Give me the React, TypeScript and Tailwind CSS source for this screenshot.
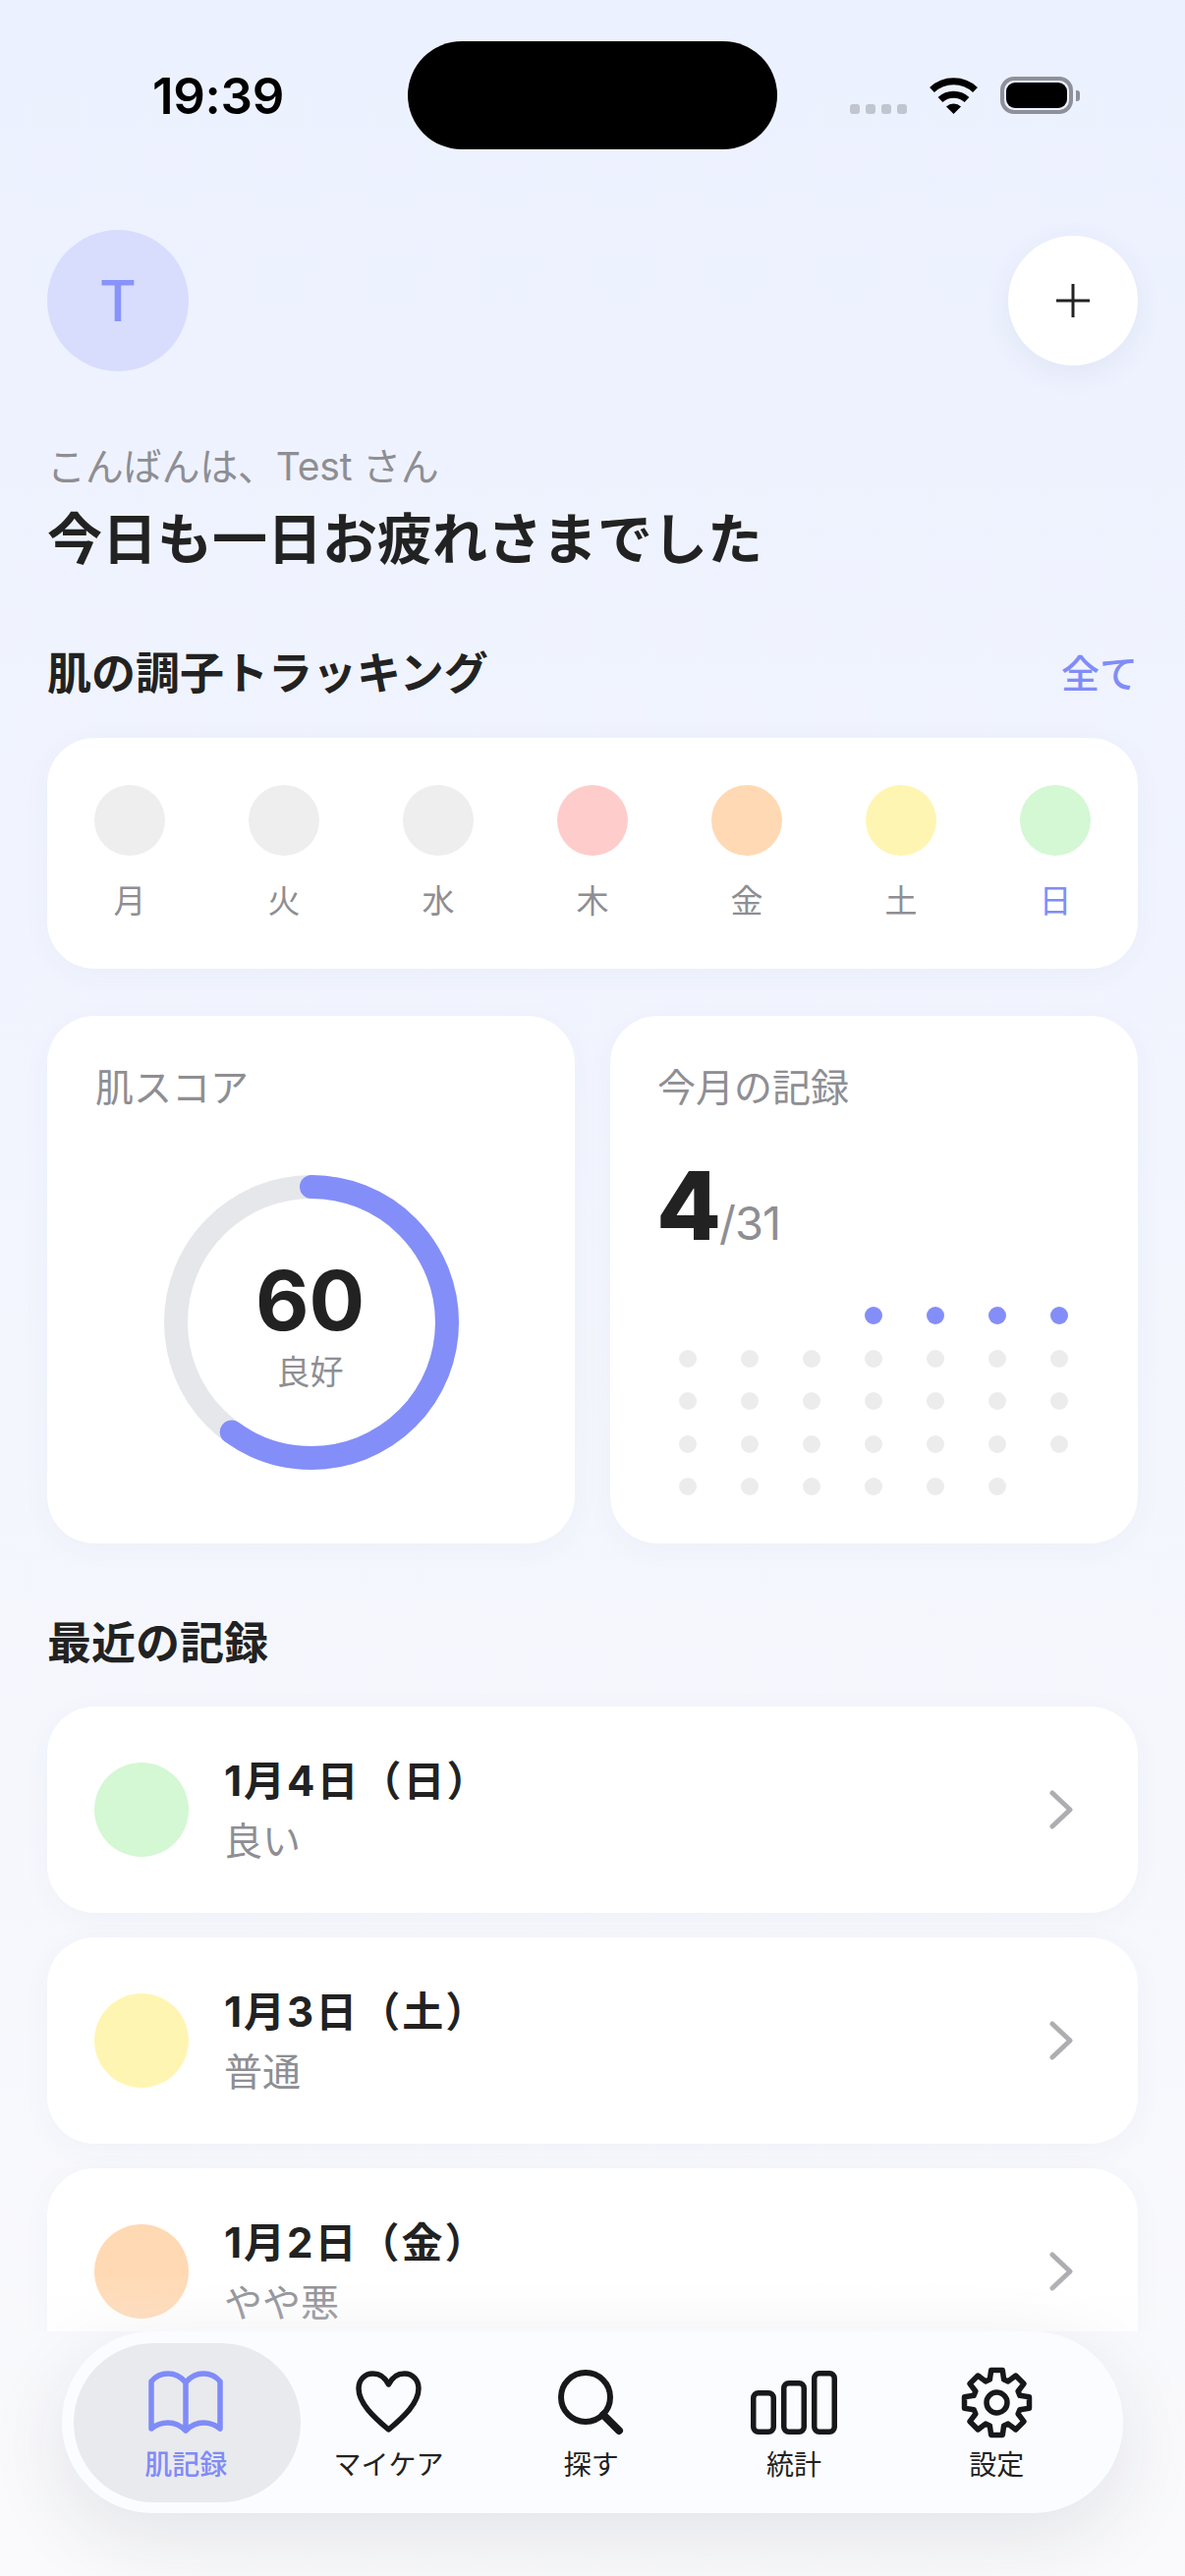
import React from 'react';

const week = [
  { label: '月', color: 'bg-[#eeeeee]', text: 'text-[#8e8e93]' },
  { label: '火', color: 'bg-[#eeeeee]', text: 'text-[#8e8e93]' },
  { label: '水', color: 'bg-[#eeeeee]', text: 'text-[#8e8e93]' },
  { label: '木', color: 'bg-[#ffcccc]', text: 'text-[#8e8e93]' },
  { label: '金', color: 'bg-[#ffd9b3]', text: 'text-[#8e8e93]' },
  { label: '土', color: 'bg-[#fff5b3]', text: 'text-[#8e8e93]' },
  { label: '日', color: 'bg-[#d4f7d4]', text: 'text-[#818cf8]' },
];

const records = [
  { date: '1月4日（日）', note: '良い', color: 'bg-[#d4f7d4]' },
  { date: '1月3日（土）', note: '普通', color: 'bg-[#fff5b3]' },
  { date: '1月2日（金）', note: 'やや悪', color: 'bg-[#ffd9b3]' },
];

// 8 tooth cog outline, 73x73 box
const gearPath = () => {
  const pts: string[] = [];
  const at = (r: number, deg: number) => {
    const a = ((deg - 90) * Math.PI) / 180;
    return `${(36.5 + r * Math.cos(a)).toFixed(2)} ${(36.5 + r * Math.sin(a)).toFixed(2)}`;
  };
  for (let i = 0; i < 8; i++) {
    const c = i * 45;
    pts.push(at(24.5, c - 17), at(33.5, c - 10), at(33.5, c + 10), at(24.5, c + 17));
  }
  return `M${pts.join('L')}Z`;
};

const BookIcon = () => (
  <svg width="76" height="64" viewBox="0 0 76 64" fill="none" stroke="#7f8bf8" strokeWidth="5.5" strokeLinejoin="round" strokeLinecap="round">
    <path d="M38 12C33 6 26 3 20 3C13 3 7 6 3 11V59C8 55 14 53 20 53C27 53 33 56 38 61C43 56 49 53 56 53C62 53 68 55 73 59V11C69 6 63 3 56 3C50 3 43 6 38 12ZM38 12V61" />
  </svg>
);

const HeartIcon = () => (
  <svg width="67" height="64" viewBox="0 0 67 64" fill="none" stroke="#18181b" strokeWidth="5.5" strokeLinejoin="round">
    <path d="M33.5 14C30 7 24 3 17.5 3C9 3 3 9.5 3 18C3 33 18 47 33.5 60C49 47 64 33 64 18C64 9.5 58 3 49.5 3C43 3 37 7 33.5 14Z" />
  </svg>
);

const SearchIcon = () => (
  <svg width="67" height="67" viewBox="0 0 67 67" fill="none" stroke="#18181b" strokeLinecap="round">
    <circle cx="28" cy="28" r="25" strokeWidth="6" />
    <path d="M46 46L62 62" strokeWidth="8" />
  </svg>
);

const BarsIcon = () => (
  <svg width="88" height="65" viewBox="0 0 88 65" fill="none" stroke="#18181b" strokeWidth="5.5">
    <rect x="2.75" y="22.75" width="20.5" height="39.5" rx="5" />
    <rect x="33.75" y="12.75" width="20.5" height="49.5" rx="5" />
    <rect x="64.75" y="2.75" width="20.5" height="59.5" rx="5" />
  </svg>
);

const GearIcon = () => (
  <svg width="73" height="73" viewBox="0 0 73 73" fill="none" stroke="#18181b" strokeWidth="5.5" strokeLinejoin="round">
    <path d={gearPath()} />
    <circle cx="36.5" cy="36.5" r="10.5" />
  </svg>
);

const navItems = [
  { label: '肌記録', icon: <BookIcon />, active: true },
  { label: 'マイケア', icon: <HeartIcon />, active: false },
  { label: '探す', icon: <SearchIcon />, active: false },
  { label: '統計', icon: <BarsIcon />, active: false },
  { label: '設定', icon: <GearIcon />, active: false },
];

const StatusBar = () => (
  <div className="flex items-center h-[110px] mt-[42px] shrink-0">
    <span className="ml-[155px] w-[260px] text-[51px] font-semibold leading-none text-black tracking-[-0.3px]">19:39</span>
    <div className="w-[376px] h-[110px] rounded-[55px] bg-black" />
    <div className="flex items-center ml-[74px]">
      <div className="flex gap-[6px] mt-[28px]">
        <span className="w-[10px] h-[10px] rounded-[3px] bg-[#c1c5d0]" />
        <span className="w-[10px] h-[10px] rounded-[3px] bg-[#c1c5d0]" />
        <span className="w-[10px] h-[10px] rounded-[3px] bg-[#c1c5d0]" />
        <span className="w-[10px] h-[10px] rounded-[3px] bg-[#c1c5d0]" />
      </div>
      <svg className="ml-[22px]" width="51" height="37" viewBox="0 0 51 37" fill="none" stroke="#000" strokeWidth="7">
        <path d="M3.5 12.5A32 32 0 0 1 47.5 12.5" />
        <path d="M12 22.5A20 20 0 0 1 39 22.5" />
        <path d="M18 29.5A11 11 0 0 1 33 29.5L25.5 37Z" fill="#000" stroke="none" />
      </svg>
      <div className="ml-[22px] flex items-center">
        <div className="w-[74px] h-[38px] rounded-[14px] border-[4px] border-[#8e909a] p-[2px]">
          <div className="w-full h-full rounded-[9px] bg-black" />
        </div>
        <span className="ml-[3px] w-[4px] h-[11px] rounded-r-[3px] bg-[#8e909a]" />
      </div>
    </div>
  </div>
);

const ScoreCard = () => {
  const r = 138;
  const circumference = 2 * Math.PI * r;
  return (
    <div className="flex-1 h-[537px] rounded-[48px] bg-white pt-[26px] shadow-[0_6px_30px_rgba(60,70,120,0.04)]">
      <p className="pl-[49px] pt-[20px] text-[39px] leading-[54px] text-[#8e8e93]">肌スコア</p>
      <div className="relative w-[300px] h-[300px] mx-auto mt-[62px]">
        <svg width="300" height="300" viewBox="0 0 300 300" fill="none" strokeWidth="24">
          <circle cx="150" cy="150" r={r} stroke="#e5e7eb" />
          <circle
            cx="150"
            cy="150"
            r={r}
            stroke="#838ef8"
            strokeLinecap="round"
            strokeDasharray={`${circumference * 0.6} ${circumference}`}
            transform="rotate(-90 150 150)"
          />
        </svg>
        <div className="absolute inset-0 flex flex-col items-center justify-center pt-[10px] pr-[2px]">
          <span className="text-[84px] leading-[84px] font-bold text-[#222222]">60</span>
          <span className="mt-[8px] text-[34px] leading-[46px] text-[#8e8e93]">良好</span>
        </div>
      </div>
    </div>
  );
};

const MonthCard = () => (
  <div className="flex-1 h-[537px] rounded-[48px] bg-white shadow-[0_6px_30px_rgba(60,70,120,0.04)]">
    <p className="pl-[48px] pt-[46px] text-[39px] leading-[54px] text-[#8e8e93]">今月の記録</p>
    <div className="flex items-baseline pl-[47px] mt-[45px]">
      <span className="text-[96px] leading-[96px] font-extrabold text-[#222222]">4</span>
      <span className="-ml-[2px] text-[47px] leading-[48px] text-[#8e8e93] tracking-[-1px]">/31</span>
    </div>
    <div className="grid grid-cols-[repeat(7,18px)] gap-x-[45px] gap-y-[25.5px] pl-[70px] mt-[55px]">
      {Array.from({ length: 34 }).map((_, i) => (
        <span
          key={i}
          className={`w-[18px] h-[18px] rounded-full ${i < 3 ? 'bg-transparent' : i < 7 ? 'bg-[#838ef8]' : 'bg-[#ececec]'}`}
        />
      ))}
    </div>
  </div>
);

const App: React.FC = () => {
  return (
    <div className="w-[1206px] h-[2622px] flex flex-col overflow-hidden bg-gradient-to-b from-[#ecf1ff] to-[#fafafc] font-[Inter,'Noto_Sans_CJK_JP',sans-serif]">
      <StatusBar />

      <main className="relative flex-1 min-h-0 overflow-hidden px-[48px]">
        {/* Header */}
        <div className="flex items-center justify-between h-[144px] mt-[82px]">
          <div className="w-[144px] h-[144px] rounded-full bg-[#d8ddfd] flex items-center justify-center text-[58px] font-medium text-[#8894fa]">T</div>
          <div className="w-[132px] h-[132px] rounded-full bg-white flex items-center justify-center shadow-[0_8px_30px_rgba(60,70,120,0.07)]">
            <svg width="34" height="34" viewBox="0 0 34 34" fill="none" stroke="#222222" strokeWidth="3">
              <path d="M17 0V34M0 17H34" />
            </svg>
          </div>
        </div>

        <p className="mt-[70px] text-[39px] leading-[54px] text-[#8e8e93] tracking-[-0.2px]">こんばんは、Test さん</p>
        <h1 className="mt-[10px] text-[56px] leading-[74px] font-bold text-[#222222]">今日も一日お疲れさまでした</h1>

        {/* Tracking */}
        <div className="flex items-center justify-between mt-[70px] h-[60px]">
          <h2 className="text-[45px] font-bold text-[#222222]">肌の調子トラッキング</h2>
          <span className="text-[39px] font-medium text-[#818cf8]">全て</span>
        </div>
        <div className="grid grid-cols-7 mt-[35px] h-[235px] px-[5.5px] pt-[48px] rounded-[48px] bg-white shadow-[0_6px_30px_rgba(60,70,120,0.04)]">
          {week.map((d) => (
            <div key={d.label} className="flex flex-col items-center">
              <span className={`w-[72px] h-[72px] rounded-full ${d.color}`} />
              <span className={`mt-[23px] text-[33px] leading-[46px] ${d.text}`}>{d.label}</span>
            </div>
          ))}
        </div>

        {/* Score + month */}
        <div className="flex gap-[36px] mt-[48px]">
          <ScoreCard />
          <MonthCard />
        </div>

        {/* Recent */}
        <h2 className="mt-[72px] text-[45px] leading-[60px] font-bold text-[#222222]">最近の記録</h2>
        <div className="flex flex-col gap-[25px] mt-[34px]">
          {records.map((r) => (
            <div key={r.date} className="flex items-center h-[210px] shrink-0 pl-[48px] pr-[66px] rounded-[48px] bg-white shadow-[0_6px_30px_rgba(60,70,120,0.04)]">
              <span className={`w-[96px] h-[96px] rounded-full ${r.color}`} />
              <div className="ml-[36px] flex-1">
                <p className="text-[42px] leading-[58px] font-bold text-[#222222] tracking-[2px]">{r.date}</p>
                <p className="mt-[5px] text-[39px] leading-[54px] text-[#8e8e93]">{r.note}</p>
              </div>
              <svg width="24" height="40" viewBox="0 0 24 40" fill="none" stroke="#aeaeb2" strokeWidth="5" strokeLinecap="round" strokeLinejoin="round">
                <path d="M3 3L21 20L3 37" />
              </svg>
            </div>
          ))}
        </div>

        <div className="absolute left-0 right-0 bottom-0 h-[60px] bg-gradient-to-b from-transparent to-[#fafafc]/25" />
      </main>

      {/* Tab bar */}
      <nav className="relative shrink-0 flex h-[185px] mx-[63px] mb-[64px] pl-[23px] rounded-[92px] bg-[#fbfcff] shadow-[0_24px_80px_rgba(30,35,60,0.10)]">
        <span className="absolute left-[12px] top-[12px] w-[231px] h-[162px] rounded-[81px] bg-[#e9eaee]" />
        {navItems.map((item) => (
          <div key={item.label} className="relative w-[206.3px] flex flex-col items-center">
            <div className="h-[76px] mt-[34px] flex items-center justify-center">{item.icon}</div>
            <span className={`mt-[8px] text-[28px] leading-[36px] ${item.active ? 'text-[#7f8bf8] font-medium' : 'text-[#222222]'}`}>{item.label}</span>
          </div>
        ))}
      </nav>
    </div>
  );
};

export default App;
